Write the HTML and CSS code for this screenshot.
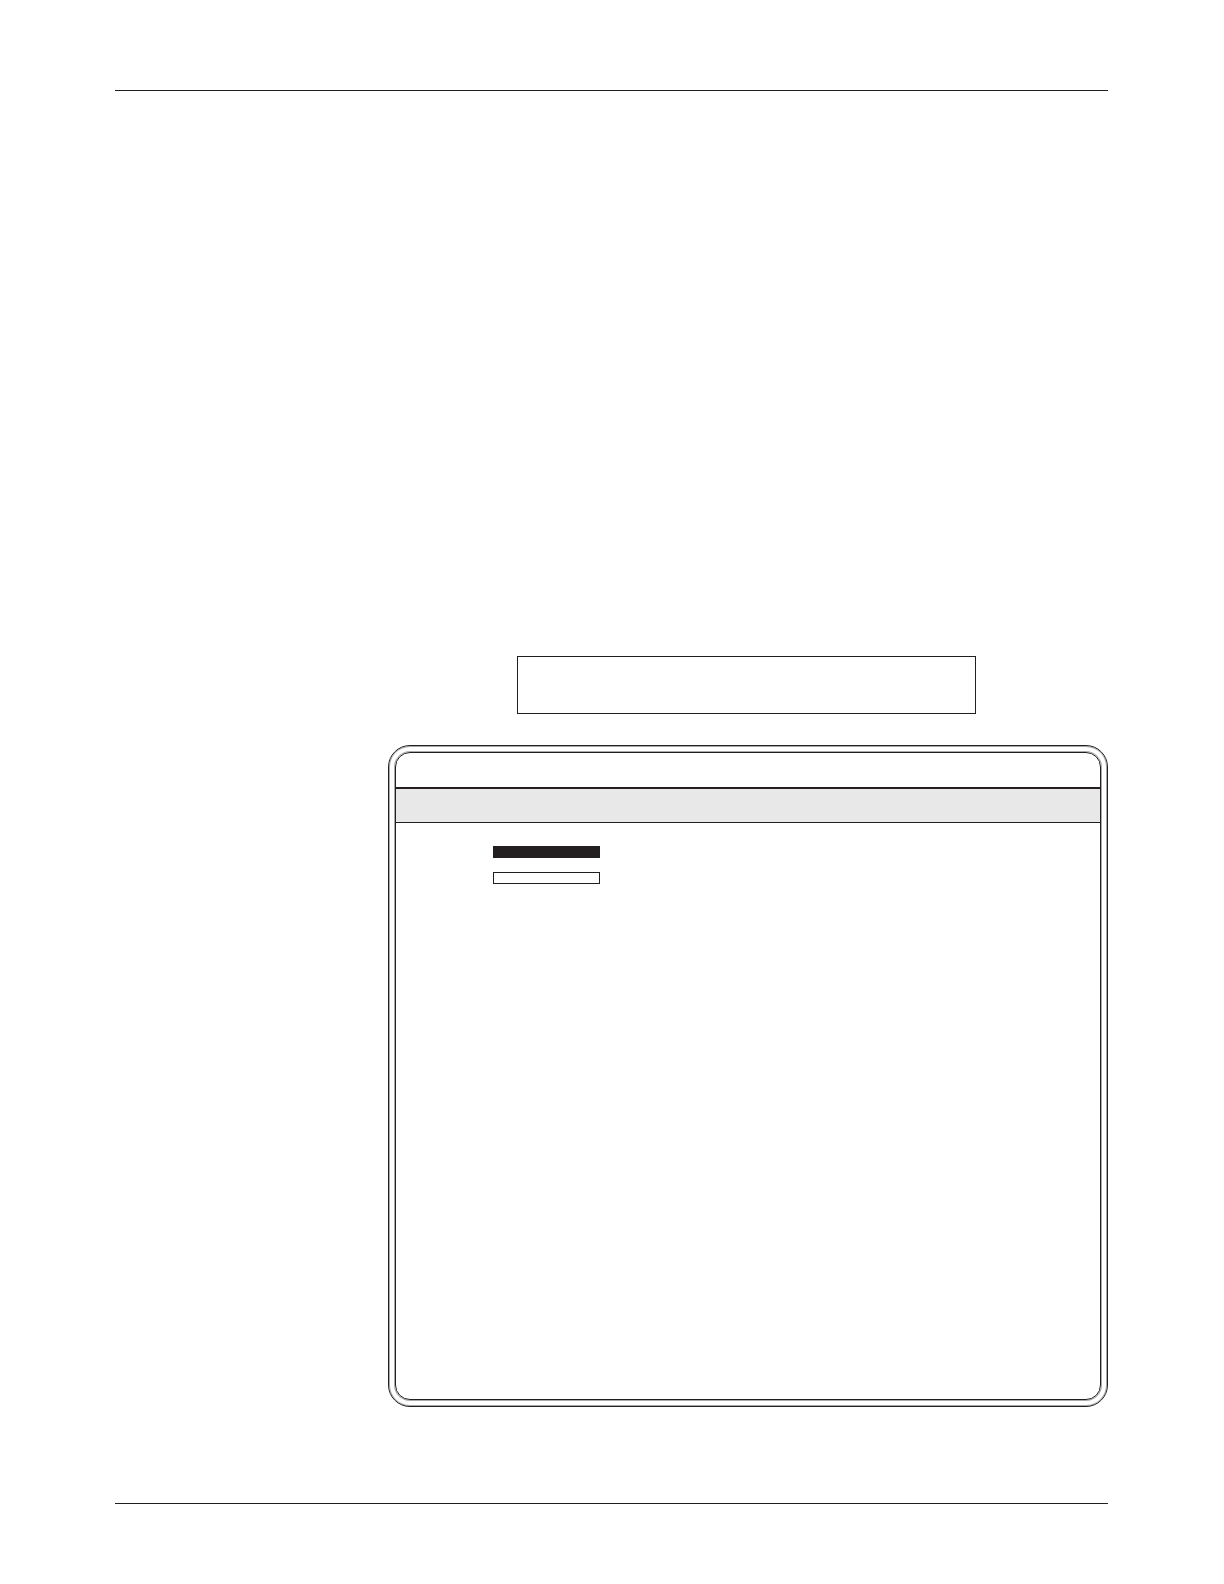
FILE: index.html
```
<!DOCTYPE html>
<html lang="en">
<head>
    <meta charset="UTF-8">
    <meta name="viewport" content="width=device-width, initial-scale=1.0">
    <title>Page</title>
    <link rel="stylesheet" href="styles.css">
</head>
<body>

    <div class="page">
        <header class="page-header"></header>

        <main class="content">
            <div class="box"></div>

            <div class="frame">
                <div class="screen">
                    <div class="title-bar"></div>
                    <div class="menu-bar"></div>
                    <div class="fields">
                        <div class="field filled"></div>
                        <div class="field"></div>
                    </div>
                </div>
            </div>
        </main>

        <footer class="page-footer"></footer>
    </div>

</body>
</html>
```

FILE: styles.css
```
* {
    box-sizing: border-box;
}

body {
    font-family: Arial, "Liberation Sans", sans-serif;
    margin: 0;
    background-color: #fff;
}

.page {
    min-height: 100vh;
    padding: 90px 116px 80px 115px;
    display: flex;
    flex-direction: column;
}

/* Top and bottom rules */
.page-header,
.page-footer {
    border-top: 1px solid #231f20;
}

.content {
    flex: 1;
    display: flex;
    flex-direction: column;
    margin-left: 273px;
    padding: 565px 0 96px;
}

.box {
    height: 58px;
    margin: 0 132px 31px 129px;
    border: 1px solid #231f20;
}

/* Double rounded frame, the grey shadow thickens each line */
.frame {
    flex: 1;
    display: flex;
    padding: 6px;
    border: 1px solid #231f20;
    border-radius: 22px;
    box-shadow: inset 0 0 0 1px #aaa;
}

.screen {
    flex: 1;
    border: 1px solid #231f20;
    border-radius: 15px;
    box-shadow: 0 0 0 1px #aaa;
    overflow: hidden;
}

.title-bar {
    height: 36px;
    border-bottom: 2px solid #231f20;
}

.menu-bar {
    height: 34px;
    background-color: #e8e8e8;
    border-bottom: 1px solid #231f20;
}

.fields {
    padding: 23px 97px;
}

.field {
    width: 107px;
    height: 12px;
    margin-bottom: 14px;
    border: 1px solid #231f20;
}

.filled {
    background-color: #231f20;
}
```
